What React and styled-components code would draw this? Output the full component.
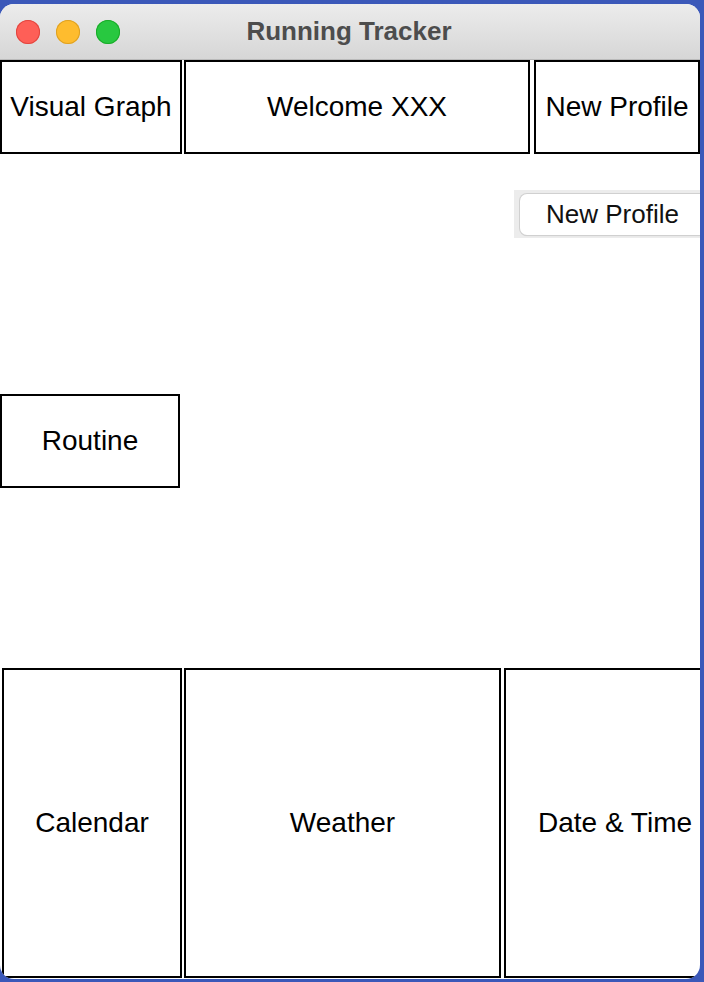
import React from 'react'
import styled, { createGlobalStyle } from 'styled-components'

const Global = createGlobalStyle`
  html, body {
    margin: 0;
    padding: 0;
    background: #3b58b9;
    font-family: "Liberation Sans", Arial, sans-serif;
  }
`

function App() {
  return (
    <>
      <Global />
      <Window>
        <TitleBar>
          <Lights>
            <Light color="#fe5f57" edge="#e1463f" />
            <Light color="#febc2e" edge="#dea123" />
            <Light color="#28c840" edge="#1aab29" />
          </Lights>
          <Title>Running Tracker</Title>
        </TitleBar>
        <Content>
          <TopRow>
            <Panel w="182px">Visual Graph</Panel>
            <Panel w="346px" gap="2px">Welcome XXX</Panel>
            <Panel w="166px" gap="4px">New Profile</Panel>
          </TopRow>
          <ButtonWell>
            <MacButton>New Profile</MacButton>
          </ButtonWell>
          <RoutineSlot>
            <Panel w="180px">Routine</Panel>
          </RoutineSlot>
          <BottomRow>
            <Panel w="180px" h="310px" gap="2px">Calendar</Panel>
            <Panel w="317px" h="310px" gap="2px">Weather</Panel>
            <Panel w="222px" h="310px" gap="3px">Date &amp; Time</Panel>
          </BottomRow>
        </Content>
      </Window>
    </>
  )
}

const Window = styled.div`
  width: 700px;
  height: 975px;
  margin-top: 4px;
  background: #fff;
  border-radius: 14px;
  overflow: hidden;
  display: flex;
  flex-direction: column;
`

const TitleBar = styled.div`
  height: 55px;
  flex-shrink: 0;
  position: relative;
  display: flex;
  align-items: center;
  justify-content: center;
  background: linear-gradient(#ececec, #d6d6d6);
  border-bottom: 1px solid #b9b9b9;
`

const Lights = styled.div`
  position: absolute;
  left: 16px;
  top: 16px;
  display: flex;
  gap: 16px;
`

const Light = styled.span`
  width: 24px;
  height: 24px;
  border-radius: 50%;
  background: ${p => p.color};
  box-shadow: inset 0 0 0 1px ${p => p.edge};
`

const Title = styled.div`
  font-family: "Liberation Sans", Arial, sans-serif;
  font-weight: 700;
  font-size: 26px;
  color: #4d4d4d;
  margin-left: -2px;
`

const Content = styled.div`
  display: flex;
  flex-direction: column;
  overflow: hidden;
`

const TopRow = styled.div`
  display: flex;
`

const RoutineSlot = styled.div`
  margin-top: 156px;
`

const BottomRow = styled.div`
  display: flex;
  margin-top: 180px;
`

const Panel = styled.div`
  box-sizing: border-box;
  width: ${p => p.w};
  height: ${p => p.h || '94px'};
  margin-left: ${p => p.gap || 0};
  border: 2px solid #000;
  display: flex;
  align-items: center;
  justify-content: center;
  font-family: "Liberation Sans", Arial, sans-serif;
  font-size: 28px;
  color: #000;
  white-space: nowrap;
  overflow: hidden;
  flex-shrink: 0;
`

const ButtonWell = styled.div`
  align-self: flex-end;
  margin-top: 36px;
  width: 186px;
  height: 48px;
  background: #ececec;
  display: flex;
  align-items: center;
  justify-content: flex-end;
`

const MacButton = styled.button`
  width: 180px;
  height: 41px;
  border: none;
  border-radius: 7px 0 0 7px;
  background: #fff;
  box-shadow: 0 0 0 1px #d0d0d0, 0 1px 1px rgba(0,0,0,0.15);
  font-family: "Liberation Sans", Arial, sans-serif;
  font-size: 26px;
  color: #111;
  text-align: left;
  padding: 0 0 0 26px;
`

export default App
